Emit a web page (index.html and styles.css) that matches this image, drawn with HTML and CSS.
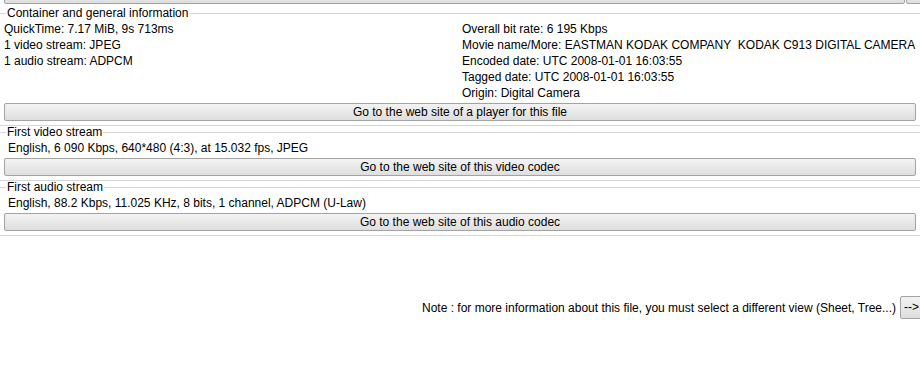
FILE: index.html
```html
<!DOCTYPE html>
<html>

<head>
  <title>MediaInfo - Easy view</title>
  <link rel="stylesheet" href="styles.css">
</head>

<body>
  <div class="toprow">
    <div class="btn btn-wide"></div>
    <div class="btn btn-small"></div>
  </div>

  <fieldset class="group">
    <legend>Container and general information</legend>
    <div class="cols">
      <div class="col">
        <div class="line">QuickTime: 7.17 MiB, 9s 713ms</div>
        <div class="line">1 video stream: JPEG</div>
        <div class="line">1 audio stream: ADPCM</div>
      </div>
      <div class="col">
        <div class="line">Overall bit rate: 6 195 Kbps</div>
        <div class="line">Movie name/More: EASTMAN KODAK COMPANY&nbsp; KODAK C913 DIGITAL CAMERA</div>
        <div class="line">Encoded date: UTC 2008-01-01 16:03:55</div>
        <div class="line">Tagged date: UTC 2008-01-01 16:03:55</div>
        <div class="line">Origin: Digital Camera</div>
      </div>
    </div>
    <div class="btn btn-site">Go to the web site of a player for this file</div>
  </fieldset>

  <fieldset class="group">
    <legend>First video stream</legend>
    <div class="stream">
      <div class="line">English, 6 090 Kbps, 640*480 (4:3), at 15.032 fps, JPEG</div>
    </div>
    <div class="btn btn-site">Go to the web site of this video codec</div>
  </fieldset>

  <fieldset class="group">
    <legend>First audio stream</legend>
    <div class="stream">
      <div class="line">English, 88.2 Kbps, 11.025 KHz, 8 bits, 1 channel, ADPCM (U-Law)</div>
    </div>
    <div class="btn btn-site">Go to the web site of this audio codec</div>
  </fieldset>

  <div class="note">
    <span>Note : for more information about this file, you must select a different view (Sheet, Tree...)</span>
    <div class="btn btn-next">--&gt;</div>
  </div>
</body>

</html>
```

FILE: styles.css
```css
html {
  overflow: hidden;
}

body {
  margin: 0;
  background: white;
  color: black;
  font-family: "Liberation Sans", Arial, sans-serif;
  font-size: 12px;
}

.btn {
  box-sizing: border-box;
  height: 18px;
  line-height: 16px;
  text-align: center;
  border: 1px solid #a3a3a3;
  border-radius: 2px;
  background: linear-gradient(#f3f3f3, #e9e9e9 50%, #dedede);
  white-space: nowrap;
}

.toprow {
  display: flex;
  margin-top: -14px;
  padding-left: 4px;
  margin-right: -6px;
  gap: 1px;
}

.btn-wide {
  flex: 1;
}

.btn-small {
  width: 20px;
}

.group {
  margin: 0;
  padding: 2px 0 4px 0;
  border: none;
  border-top: 1px solid #d6d6d6;
  border-bottom: 1px solid #d6d6d6;
}

.group:first-of-type {
  margin-top: 3px;
}

.group legend {
  line-height: 12px;
  padding: 0 1px;
  margin-left: 6px;
}

.cols {
  display: grid;
  grid-template-columns: 458px 1fr;
  padding-left: 4px;
}

.stream {
  padding-left: 8px;
}

.line {
  height: 16px;
  line-height: 17px;
  white-space: nowrap;
}

.btn-site {
  margin: 2px 4px 0 4px;
}

.note {
  display: flex;
  justify-content: flex-end;
  align-items: center;
  gap: 4px;
  margin-top: 60px;
  margin-right: -3px;
}

.btn-next {
  height: 23px;
  line-height: 21px;
  width: 23px;
  text-align: left;
  padding-left: 3px;
}
```
